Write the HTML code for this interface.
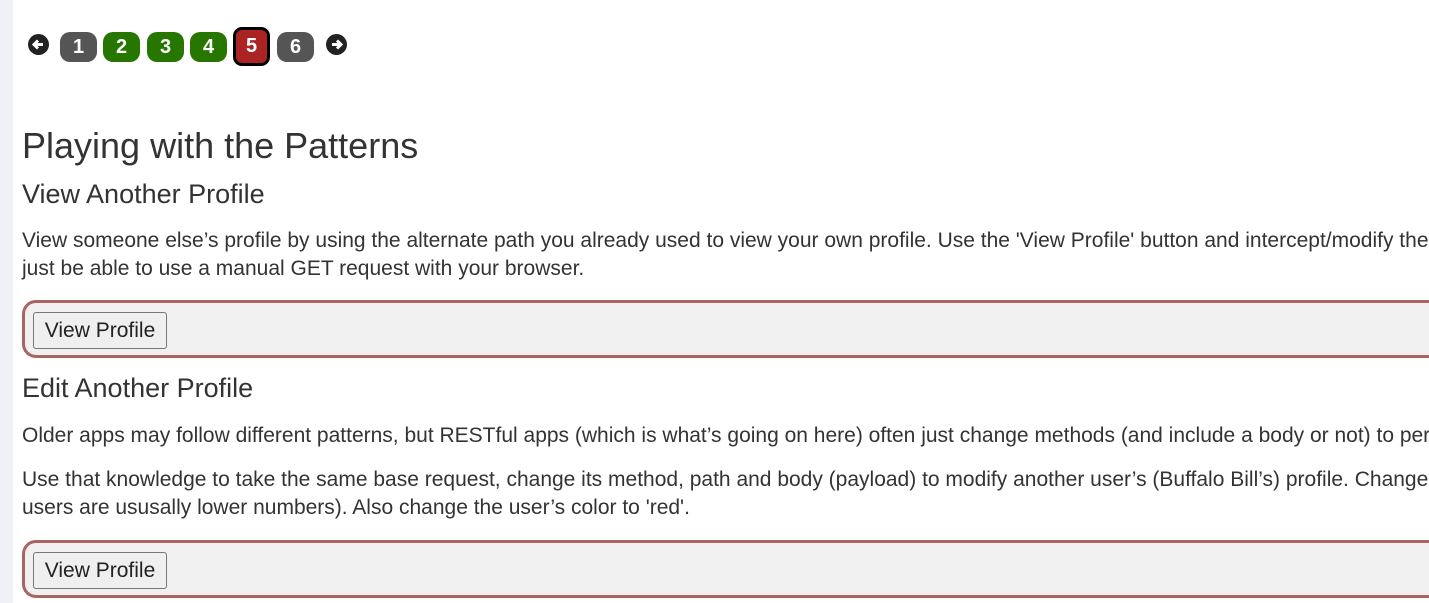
<!DOCTYPE html>
<html><head><meta charset="utf-8"><style>
html,body{margin:0;padding:0;width:1429px;height:603px;overflow:hidden;background:#fff;font-family:"Liberation Sans",Arial,sans-serif;color:#333}
.strip{position:absolute;left:0;top:0;width:13px;height:603px;background:#f0f1f6}
.a{position:absolute;white-space:nowrap}
.pg{position:absolute;top:32px;width:37px;height:30px;border-radius:10px;color:#fff;font-weight:bold;font-size:20px;line-height:30px;text-align:center}
.g{background:#555}.gr{background:#267600}
.arr{position:absolute;top:34px;width:21px;height:21px;border-radius:50%;background:#222}
.p{font-size:21px;line-height:28px}
.box{position:absolute;left:22px;width:1440px;height:52px;border:3px solid #a96464;border-radius:14px;background:#f0f0f0}
.btn{position:absolute;left:8px;top:9px;width:132px;height:35px;border:1px solid #777;border-radius:3px;background:#efefef;font-size:21px;line-height:35px;text-align:center;color:#222}
</style></head><body>
<div class="strip"></div>
<div class="arr" style="left:28px"><svg width="21" height="21" viewBox="0 0 21 21"><path d="M15 10.5H7M10 6.5L6 10.5L10 14.5" stroke="#fff" stroke-width="3" fill="none"/></svg></div>
<div class="pg g" style="left:60px">1</div>
<div class="pg gr" style="left:103px">2</div>
<div class="pg gr" style="left:147px">3</div>
<div class="pg gr" style="left:190px">4</div>
<div class="pg" style="left:233px;top:27px;width:31px;height:33px;line-height:33px;background:#ab2424;border:3px solid #000;border-radius:9px">5</div>
<div class="pg g" style="left:277px">6</div>
<div class="arr" style="left:326px"><svg width="21" height="21" viewBox="0 0 21 21"><path d="M6 10.5H14M11 6.5L15 10.5L11 14.5" stroke="#fff" stroke-width="3" fill="none"/></svg></div>

<div class="a" style="left:22px;top:124px;font-size:36px;line-height:44px">Playing with the Patterns</div>
<div class="a" style="left:22px;top:178px;font-size:27px;line-height:32px">View Another Profile</div>
<div class="a p" style="left:22px;top:227px">View someone else’s profile by using the alternate path you already used to view your own profile. Use the 'View Profile' button and intercept/modify the request<br>just be able to use a manual GET request with your browser.</div>
<div class="box" style="top:300px"><div class="btn">View Profile</div></div>
<div class="a" style="left:22px;top:372px;font-size:27px;line-height:32px">Edit Another Profile</div>
<div class="a p" style="left:22px;top:422px">Older apps may follow different patterns, but RESTful apps (which is what’s going on here) often just change methods (and include a body or not) to perform</div>
<div class="a p" style="left:22px;top:466px">Use that knowledge to take the same base request, change its method, path and body (payload) to modify another user’s (Buffalo Bill’s) profile. Change the<br>users are ususally lower numbers). Also change the user’s color to 'red'.</div>
<div class="box" style="top:540px"><div class="btn">View Profile</div></div>
</body></html>
